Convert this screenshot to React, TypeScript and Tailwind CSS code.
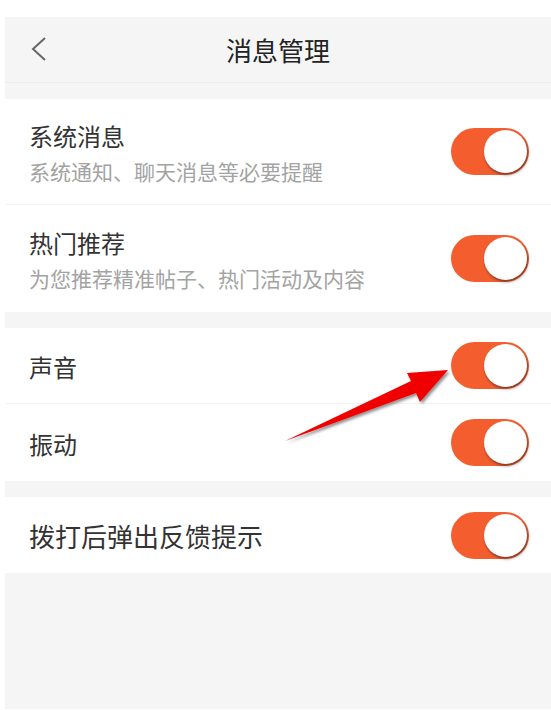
import React, { useState } from "react";

type Item = {
	id: string;
	title: string;
	desc?: string;
	big?: boolean;
};

const groups: Item[][] = [
	[
		{ id: "system", title: "系统消息", desc: "系统通知、聊天消息等必要提醒" },
		{ id: "hot", title: "热门推荐", desc: "为您推荐精准帖子、热门活动及内容" },
	],
	[
		{ id: "sound", title: "声音" },
		{ id: "vibrate", title: "振动" },
	],
	[{ id: "feedback", title: "拨打后弹出反馈提示", big: true }],
];

const font = { fontFamily: '"Noto Sans CJK SC", "Noto Sans", sans-serif' };

const Toggle: React.FC<{ on: boolean; onClick: () => void }> = ({ on, onClick }) => (
	<button
		onClick={onClick}
		className={`relative w-[78px] h-[47px] rounded-full shrink-0 ${
			on ? "bg-[#f45e2f]" : "bg-[#e5e5e5]"
		}`}
	>
		<span
			className={`absolute top-[2px] w-[43px] h-[43px] rounded-full bg-white shadow-[1px_2px_3px_rgba(0,0,0,0.45)] ${
				on ? "left-[33px]" : "left-[2px]"
			}`}
		/>
	</button>
);

export default function App() {
	const [state, setState] = useState<Record<string, boolean>>({
		system: true,
		hot: true,
		sound: true,
		vibrate: true,
		feedback: true,
	});

	const flip = (id: string) => setState((s) => ({ ...s, [id]: !s[id] }));

	return (
		<div className="relative bg-white min-h-[710px] pt-[17px] pl-[5px]" style={font}>
			<div className="bg-[#f5f5f5] h-[692px] flex flex-col">
				{/* header */}
				<div className="relative h-[66px] flex items-center justify-center border-b border-[#ededed]">
					<svg
						className="absolute left-[26px] top-[19px]"
						width="16"
						height="26"
						viewBox="0 0 16 26"
						fill="none"
					>
						<path d="M14 2 L2 13 L14 24" stroke="#666" strokeWidth="2" />
					</svg>
					<h1 className="text-[26px] leading-[32px] text-[#222]">消息管理</h1>
				</div>

				{groups.map((group, gi) => (
					<div key={gi} className="mt-[16px] bg-white">
						{group.map((item, i) => {
							const last = i === group.length - 1;
							const h = item.desc
								? last ? "h-[107px]" : "h-[106px]"
								: last && group.length > 1 ? "h-[77px]" : "h-[76px]";
							return (
								<div
									key={item.id}
									className={`flex items-center justify-between pl-[24px] pr-[22px] ${h} ${
										last ? "" : "border-b border-[#f3f3f3]"
									}`}
								>
									<div className="flex flex-col gap-[5px] pt-[2px]">
										<span
											className={`${
												item.big ? "text-[26px]" : "text-[24px]"
											} leading-[32px] text-[#333]`}
										>
											{item.title}
										</span>
										{item.desc && (
											<span className="text-[21px] leading-[28px] text-[#a3a3a3]">{item.desc}</span>
										)}
									</div>
									<Toggle on={state[item.id]} onClick={() => flip(item.id)} />
								</div>
							);
						})}
					</div>
				))}
			</div>

			{/* red annotation arrow */}
			<svg className="absolute left-0 top-0 pointer-events-none" width="551" height="710">
				<defs>
					<filter id="sh" x="-20%" y="-20%" width="140%" height="140%">
						<feDropShadow dx="2" dy="2" stdDeviation="1.5" floodColor="#000" floodOpacity="0.45" />
					</filter>
				</defs>
				<polygon
					points="285,441 411,381 407,373 448,370 420,402 416,393"
					fill="#f00000"
					filter="url(#sh)"
				/>
			</svg>
		</div>
	);
}
